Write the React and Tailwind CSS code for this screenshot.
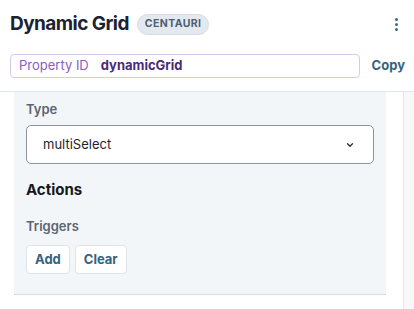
import React from "react";

export default function App() {
  return (
    <div className="relative w-[414px] h-[309px] bg-white overflow-hidden" style={{ fontFamily: "Inter, 'Liberation Sans', sans-serif" }}>
      <div className="flex items-center h-[48px] pl-[10px] pr-[8px]">
        <div className="text-[19px] font-bold text-[#1c2230] tracking-[-0.55px]">Dynamic Grid</div>
        <div className="ml-[8px] h-[21px] px-[7px] rounded-full bg-[#e4e9f0] border border-[#d5dce6] flex items-center text-[10.5px] font-bold tracking-[0.4px] text-[#4d5f73]">CENTAURI</div>
        <div className="ml-auto w-[16px] flex flex-col items-center gap-[2px] mr-[2px]">
          <span className="w-[3px] h-[3px] rounded-full bg-[#3b6a86]" />
          <span className="w-[3px] h-[3px] rounded-full bg-[#3b6a86]" />
          <span className="w-[3px] h-[3px] rounded-full bg-[#3b6a86]" />
        </div>
      </div>
      <div className="flex items-center pl-[10px] pr-[9px] mt-[6px]">
        <div className="w-[350px] h-[24px] border border-[#d9c8ee] rounded-[4px] flex items-center pl-[8px] text-[13px]">
          <span className="text-[#8a5cc0]">Property ID</span>
          <span className="ml-[12px] font-bold text-[#4a2a7a]">dynamicGrid</span>
        </div>
        <div className="ml-auto text-[13px] font-bold text-[#35637d]">Copy</div>
      </div>
      <div className="mt-[13px] border-t border-[#e3e6ea] flex">
        <div className="ml-[14px] w-[372px] h-[203px] bg-[#f3f6f9] border-b border-[#d6dde6] pl-[12px] pr-[12px] pt-[8px]">
          <div className="text-[13px] font-semibold text-[#5b6472] leading-[18px]">Type</div>
          <div className="mt-[7px] h-[39px] w-[348px] bg-white border border-[#8d939b] rounded-[5px] flex items-center pl-[16px] pr-[18px]">
            <span className="text-[13px] text-[#1f2329]">multiSelect</span>
            <svg className="ml-auto" width="10" height="10" viewBox="0 0 10 10" fill="none">
              <path d="M2.5 3.8 L5 6.3 L7.5 3.8" stroke="#2a2f36" strokeWidth="1.3" strokeLinecap="round" strokeLinejoin="round" />
            </svg>
          </div>
          <div className="mt-[16px] text-[15px] font-bold text-[#15181d] leading-[20px]">Actions</div>
          <div className="mt-[17px] text-[13px] font-semibold text-[#5b6472] leading-[18px]">Triggers</div>
          <div className="mt-[10px] flex gap-[5px]">
            <div className="h-[29px] px-[8px] bg-white border border-[#dfe4ea] rounded-[4px] flex items-center text-[13px] font-bold text-[#35637d]">Add</div>
            <div className="h-[29px] px-[8px] bg-white border border-[#dfe4ea] rounded-[4px] flex items-center text-[13px] font-bold text-[#35637d]">Clear</div>
          </div>
        </div>
        <div className="ml-auto w-[11px] h-[217px] bg-[#f8f8f8] border-l border-[#e6e6e6]" />
      </div>
    </div>
  );
}
